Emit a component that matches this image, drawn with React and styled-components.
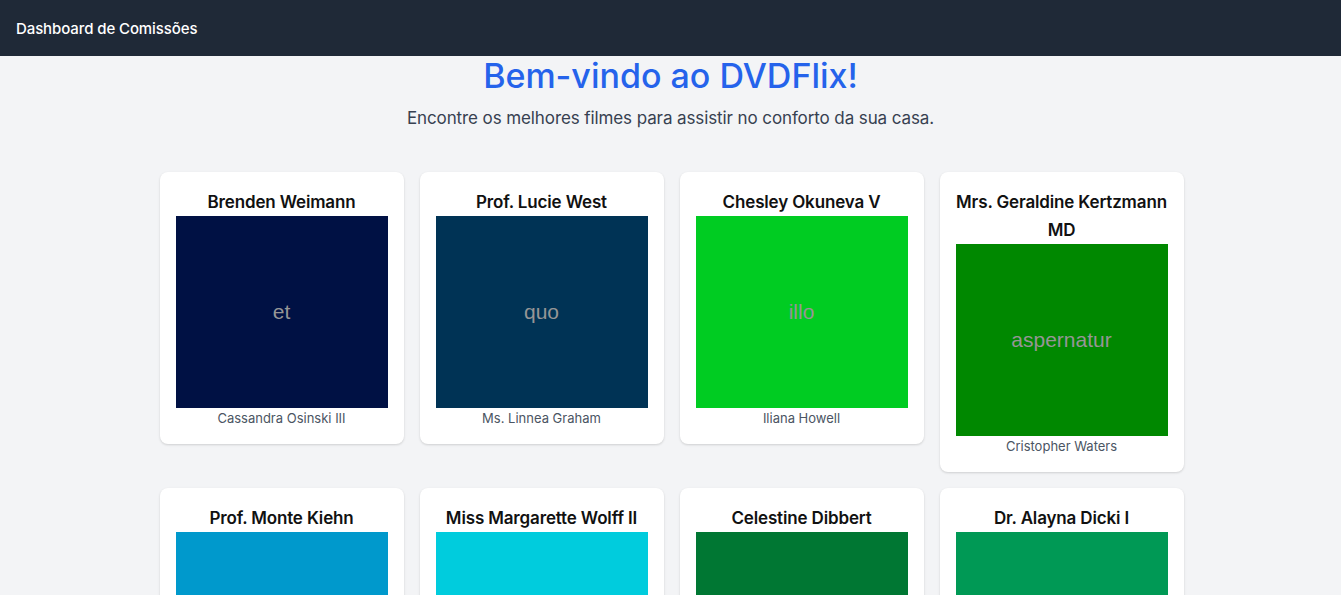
import styled, { createGlobalStyle } from "styled-components";

const GlobalStyle = createGlobalStyle`
  * { box-sizing: border-box; }
  body {
    margin: 0;
    background: #f3f4f6;
    font-family: Inter, "Noto Sans", sans-serif;
    color: #111827;
  }
`;

const movies = [
  { id: 1, title: "Brenden Weimann", word: "et", color: "#001144", director: "Cassandra Osinski III" },
  { id: 2, title: "Prof. Lucie West", word: "quo", color: "#003355", director: "Ms. Linnea Graham" },
  { id: 3, title: "Chesley Okuneva V", word: "illo", color: "#00cc22", director: "Iliana Howell" },
  { id: 4, title: "Mrs. Geraldine Kertzmann MD", word: "aspernatur", color: "#008800", director: "Cristopher Waters" },
  { id: 5, title: "Prof. Monte Kiehn", word: "qui", color: "#0099cc", director: "Dr. Elmo Hills" },
  { id: 6, title: "Miss Margarette Wolff II", word: "sed", color: "#00ccdd", director: "Kaley Bins" },
  { id: 7, title: "Celestine Dibbert", word: "vel", color: "#007733", director: "Rowan Runte" },
  { id: 8, title: "Dr. Alayna Dicki I", word: "nam", color: "#009955", director: "Jordy Kuhn" },
];

const App = () => {
  return (
    <>
      <GlobalStyle />
      <Header>
        <Brand>Dashboard de Comissões</Brand>
      </Header>
      <Main>
        <Title>Bem-vindo ao DVDFlix!</Title>
        <Subtitle>Encontre os melhores filmes para assistir no conforto da sua casa.</Subtitle>
        <Grid>
          {movies.map(({ id, title, word, color, director }) => (
            <Card key={id}>
              <CardTitle>{title}</CardTitle>
              <Poster $bg={color}>{word}</Poster>
              <Director>{director}</Director>
            </Card>
          ))}
        </Grid>
      </Main>
    </>
  );
};

export default App;

const Header = styled.header`
  height: 56px;
  background: #1f2937;
  display: flex;
  align-items: center;
  padding: 0 16px;
`;

const Brand = styled.span`
  color: #fff;
  font-size: 15px;
  font-weight: 500;
  letter-spacing: -0.1px;
`;

const Main = styled.main`
  text-align: center;
  padding-bottom: 32px;
`;

const Title = styled.h1`
  margin: 0;
  font-size: 34px;
  line-height: 40px;
  font-weight: 500;
  color: #2563eb;
`;

const Subtitle = styled.p`
  margin: 8px 0 0;
  font-size: 17px;
  line-height: 28px;
  letter-spacing: -0.1px;
  color: #374151;
`;

const Grid = styled.section`
  width: 1024px;
  margin: 40px auto 0;
  display: grid;
  grid-template-columns: repeat(4, 244px);
  gap: 16px;
  align-items: start;
  transform: translateX(1px);
`;

const Card = styled.article`
  background: #fff;
  border-radius: 8px;
  box-shadow: 0 1px 3px rgba(0, 0, 0, 0.1), 0 1px 2px rgba(0, 0, 0, 0.06);
  padding: 16px;
  display: flex;
  flex-direction: column;
  align-items: center;
`;

const CardTitle = styled.h2`
  margin: 0 -8px;
  font-size: 17px;
  line-height: 28px;
  font-weight: 600;
  letter-spacing: -0.15px;
  color: #111;
`;

const Poster = styled.div`
  width: 212px;
  height: 192px;
  background: ${({ $bg }) => $bg};
  color: #969696;
  font-family: "Liberation Sans", Arial, sans-serif;
  font-size: 21px;
  display: grid;
  place-items: center;
`;

const Director = styled.p`
  margin: 0;
  font-size: 13px;
  line-height: 20px;
  color: #4b5563;
`;
